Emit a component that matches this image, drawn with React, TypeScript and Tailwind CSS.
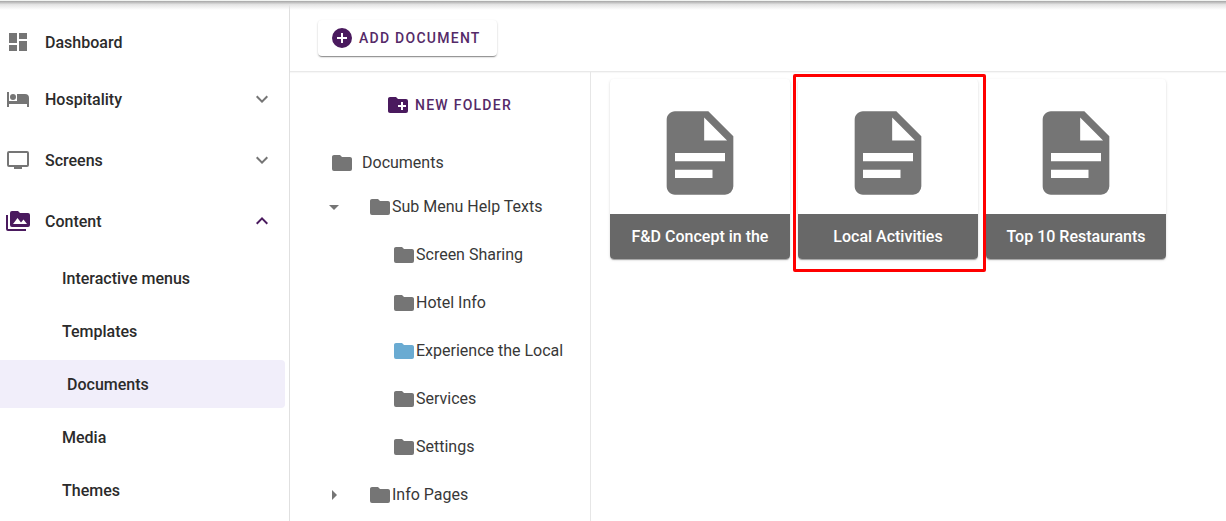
import { useState } from "react";
import clsx from "clsx";

// Material Design icon paths (24x24)
const icons = {
  dashboard: "M13,3V9H21V3M13,21H21V11H13M3,21H11V15H3M3,13H11V3H3V13Z",
  bed: "M19,7H11V14H3V5H1V20H3V17H21V20H23V11A4,4 0 0,0 19,7M7,13A3,3 0 0,0 10,10A3,3 0 0,0 7,7A3,3 0 0,0 4,10A3,3 0 0,0 7,13Z",
  television:
    "M21,17H3V5H21M21,3H3A2,2 0 0,0 1,5V17A2,2 0 0,0 3,19H8V21H16V19H21A2,2 0 0,0 23,17V5A2,2 0 0,0 21,3Z",
  folderImage:
    "M7,15L11.5,9L15,13.5L17.5,10.5L21,15M22,4H14L12,2H6A2,2 0 0,0 4,4V16A2,2 0 0,0 6,18H22A2,2 0 0,0 24,16V6A2,2 0 0,0 22,4M2,6H0V11H0V20A2,2 0 0,0 2,22H20V20H2V6Z",
  chevronDown: "M7.41,8.58L12,13.17L16.59,8.58L18,10L12,16L6,10L7.41,8.58Z",
  chevronUp: "M7.41,15.41L12,10.83L16.59,15.41L18,14L12,8L6,14L7.41,15.41Z",
  plusCircle:
    "M17,13H13V17H11V13H7V11H11V7H13V11H17M12,2A10,10 0 0,0 2,12A10,10 0 0,0 12,22A10,10 0 0,0 22,12A10,10 0 0,0 12,2Z",
  folder:
    "M10,4H4C2.89,4 2,4.89 2,6V18A2,2 0 0,0 4,20H20A2,2 0 0,0 22,18V8C22,6.89 21.1,6 20,6H12L10,4Z",
  folderPlus:
    "M10,4L12,6H20A2,2 0 0,1 22,8V18A2,2 0 0,1 20,20H4C2.89,20 2,19.1 2,18V6C2,4.89 2.89,4 4,4H10M15,9V12H12V14H15V17H17V14H20V12H17V9H15Z",
  menuDown: "M7,10L12,15L17,10H7Z",
  menuRight: "M10,17L15,12L10,7V17Z",
  fileDocument:
    "M13,9H18.5L13,3.5V9M6,2H14L20,8V20A2,2 0 0,1 18,22H6C4.89,22 4,21.1 4,20V4C4,2.89 4.89,2 6,2M15,18V16H6V18H15M18,14V12H6V14H18Z",
};

type IconName = keyof typeof icons;

function Icon({
  name,
  className = "size-6 text-[#757575]",
}: {
  name: IconName;
  className?: string;
}) {
  return (
    <svg
      viewBox="0 0 24 24"
      fill="currentColor"
      aria-hidden="true"
      className={clsx("shrink-0", className)}
    >
      <path d={icons[name]} />
    </svg>
  );
}

interface NavGroup {
  label: string;
  icon: IconName;
  children: string[];
}

const groups: NavGroup[] = [
  { label: "Hospitality", icon: "bed", children: [] },
  { label: "Screens", icon: "television", children: [] },
  {
    label: "Content",
    icon: "folderImage",
    children: [
      "Interactive menus",
      "Templates",
      "Documents",
      "Media",
      "Themes",
    ],
  },
];

const subFolders = [
  "Screen Sharing",
  "Hotel Info",
  "Experience the Local",
  "Services",
  "Settings",
];

const documents = [
  "F&D Concept in the",
  "Local Activities",
  "Top 10 Restaurants",
];

function Sidebar() {
  const [open, setOpen] = useState("Content");

  return (
    <nav className="w-[290px] shrink-0 border-r border-[#e0e0e0] pt-4 font-medium text-[#2b2b2b]">
      <a href="#dashboard" className="mb-[5px] flex h-12 items-center pl-[6px]">
        <Icon name="dashboard" />
        <span className="ml-[15px] pt-0.5">Dashboard</span>
      </a>
      {groups.map((group) => {
        const active = open === group.label;
        const color = active ? "text-[#4a1a5e]" : "text-[#757575]";
        return (
          <div key={group.label} className="flex flex-col pt-1">
            <button
              type="button"
              aria-expanded={active}
              onClick={() => setOpen(active ? "" : group.label)}
              className="mb-[9px] flex h-12 w-full items-center pr-[15px] pl-[6px]"
            >
              <Icon name={group.icon} className={clsx("size-6", color)} />
              <span className="ml-[15px] flex-1 pt-0.5 text-left">
                {group.label}
              </span>
              <Icon
                name={active ? "chevronUp" : "chevronDown"}
                className={clsx("size-6", color)}
              />
            </button>
            {active &&
              group.children.map((child) => (
                <a
                  key={child}
                  href={`#${child}`}
                  className={clsx(
                    "mr-1 mb-[5px] flex h-12 items-center rounded-r pt-0.5",
                    child === "Documents" ? "bg-[#f1eefa] pl-[67px]" : "pl-[62px]"
                  )}
                >
                  {child}
                </a>
              ))}
          </div>
        );
      })}
    </nav>
  );
}

function FolderTree() {
  const [expanded, setExpanded] = useState(true);
  const [selected, setSelected] = useState("Experience the Local");

  return (
    <aside className="w-[301px] shrink-0 border-r border-[#e6e6e6] pt-[15px] pl-8 text-[#383838]">
      <div className="flex justify-center pr-3.5">
        <button
          type="button"
          className="flex h-9 items-center gap-[5px] text-sm font-medium tracking-[0.09em] text-[#552a68] uppercase"
        >
          <Icon name="folderPlus" className="size-6 text-[#4a1a5e]" />
          New folder
        </button>
      </div>
      <button type="button" className="mt-7 mb-2 flex h-6 items-center gap-2 pl-2">
        <Icon name="folder" />
        Documents
      </button>
      <ul>
        <li>
          <div className="flex h-12 items-center gap-[22px]">
            <button
              type="button"
              aria-label="Toggle Sub Menu Help Texts"
              onClick={() => setExpanded(!expanded)}
            >
              <Icon name={expanded ? "menuDown" : "menuRight"} />
            </button>
            <button type="button" className="flex items-center">
              <Icon name="folder" />
              Sub Menu Help Texts
            </button>
          </div>
          {expanded && (
            <ul>
              {subFolders.map((name) => (
                <li key={name} className="flex h-12 items-center pl-[70px]">
                  <button
                    type="button"
                    onClick={() => setSelected(name)}
                    className="flex items-center whitespace-nowrap"
                  >
                    <Icon
                      name="folder"
                      className={clsx(
                        "size-6",
                        selected === name ? "text-[#6aabd2]" : "text-[#757575]"
                      )}
                    />
                    {name}
                  </button>
                </li>
              ))}
            </ul>
          )}
        </li>
        <li className="flex h-12 items-center gap-[22px]">
          <button type="button" aria-label="Toggle Info Pages">
            <Icon name="menuRight" />
          </button>
          <button type="button" className="flex items-center">
            <Icon name="folder" />
            Info Pages
          </button>
        </li>
      </ul>
    </aside>
  );
}

function DocumentCard({
  title,
  highlighted,
}: {
  title: string;
  highlighted: boolean;
}) {
  return (
    <div className="relative w-[180px]">
      <button
        type="button"
        className="block w-full overflow-hidden rounded bg-white shadow-[0_2px_1px_-1px_rgba(0,0,0,0.2),0_1px_1px_rgba(0,0,0,0.14),0_1px_3px_rgba(0,0,0,0.12)]"
      >
        <span className="flex h-[135px] justify-center pt-6">
          <Icon name="fileDocument" className="size-[100px] text-[#757575]" />
        </span>
        <span className="flex h-[45px] items-center justify-center bg-[#686868] font-medium text-white">
          {title}
        </span>
      </button>
      {highlighted && (
        <div className="pointer-events-none absolute -top-[5px] -right-2 -bottom-[13px] -left-[5px] z-10 rounded-xs border-3 border-[#ff0000]" />
      )}
    </div>
  );
}

export default function App() {
  return (
    <div className="flex min-h-screen flex-col bg-white font-[Roboto,sans-serif] text-base">
      {/* bottom edge of the app bar with its shadow */}
      <div className="relative h-px shrink-0 bg-[#f1f3f1]">
        <div className="absolute inset-x-0 top-px h-[9px] bg-linear-to-b from-[#a6a6a6] via-[#e4e4e4] via-40% to-transparent" />
      </div>
      <div className="flex flex-1 pt-px">
        <Sidebar />
        <div className="flex min-w-0 flex-1 flex-col">
          <header className="flex h-[70px] shrink-0 items-center border-b border-[#e9e9e9] pl-7 shadow-[0_1px_1px_rgba(0,0,0,0.03)]">
            <button
              type="button"
              className="mt-[3px] flex h-9 items-center gap-[5px] rounded bg-white pr-4 pl-3 text-sm font-medium tracking-[0.09em] text-[#552a68] uppercase shadow-[0_2px_1px_-1px_rgba(0,0,0,0.3),0_1px_2px_rgba(0,0,0,0.25)]"
            >
              <Icon name="plusCircle" className="size-6 text-[#4a1a5e]" />
              Add document
            </button>
          </header>
          <div className="flex flex-1">
            <FolderTree />
            <main className="flex flex-1 flex-wrap content-start gap-2 pt-[7px] pl-[19px]">
              {documents.map((title) => (
                <DocumentCard
                  key={title}
                  title={title}
                  highlighted={title === "Local Activities"}
                />
              ))}
            </main>
          </div>
        </div>
      </div>
    </div>
  );
}
